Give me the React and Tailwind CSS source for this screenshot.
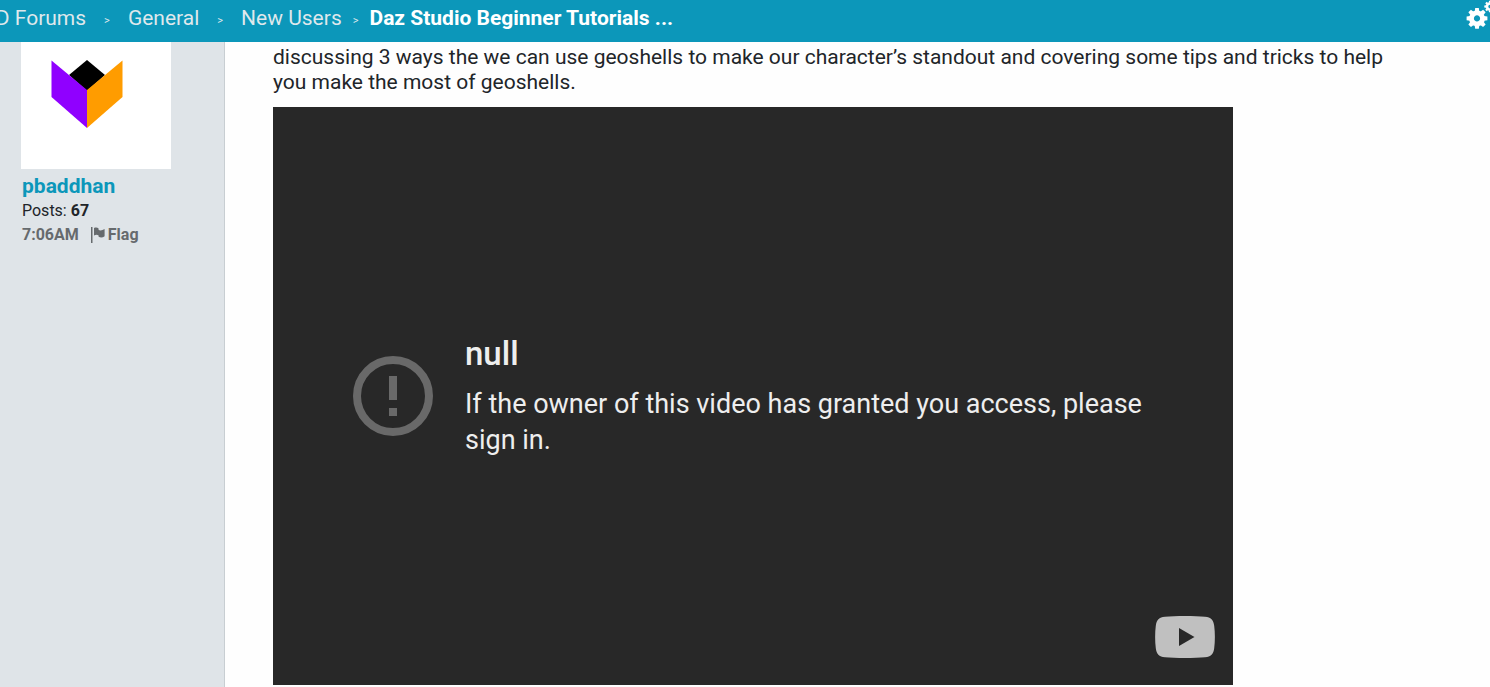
import React from "react";

const crumbs = ["3D Forums", "General", "New Users"];
const teeth = [0, 45, 90, 135, 180, 225, 270, 315];

function Gear({ transform }) {
  return (
    <g transform={transform}>
      <circle r="5.500" fill="none" stroke="#fff" strokeWidth="4.800" />
      {teeth.map((angle) => (
        <path key={angle} d="M-2.300 -7 L-1.800 -10.400 H1.800 L2.300 -7z" fill="#fff" transform={`rotate(${angle})`} />
      ))}
    </g>
  );
}

function GearsIcon() {
  return (
    <svg viewBox="0 0 32 36" className="h-9 w-8" aria-hidden="true">
      <Gear transform="translate(11 18.400)" />
      <Gear transform="translate(24 6.500) scale(.55)" />
    </svg>
  );
}

function FlagIcon() {
  return (
    <svg viewBox="0 0 14 16" className="h-4 w-3.5" fill="currentColor" aria-hidden="true">
      <path d="M0 0h1.500v16H0zM3 1c1.600-.7 3.400-.6 4.600.4V3c1.800.8 3.800.4 6-1v7.200c-1.800 1.500-4 1.600-6 .6V8.400C6.200 7.600 4.600 7.700 3 8.600z" />
    </svg>
  );
}

function Avatar() {
  return (
    <svg viewBox="0 0 150 127" className="w-[150px] bg-white" role="img" aria-label="pbaddhan">
      <path d="M66 18 84 33 66 49 48 33z" fill="#000" />
      <path d="M30.500 18.500 66 48v38L30.500 55z" fill="#9000ff" />
      <path d="M101.500 18.500 66 48v38l35.500-31z" fill="#ff9c00" />
    </svg>
  );
}

export default function App() {
  return (
    <div className="flex min-h-screen flex-col overflow-hidden bg-[#fefefe] font-[Roboto,sans-serif] text-[#212529]">
      <header className="flex h-[42px] items-center justify-between overflow-hidden bg-[#0c97ba] text-[21px] leading-6 text-[#dfe8ec]">
        <nav aria-label="Breadcrumb" className="-ml-4 -mt-1.5 flex items-center whitespace-nowrap">
          {crumbs.map((name) => (
            <React.Fragment key={name}>
              <a href="#">{name}</a>
              <span className="mx-[18px] pt-1.5 text-[11px] nth-last-2:mx-[11px]">&gt;</span>
            </React.Fragment>
          ))}
          <a href="#" className="font-bold text-white">Daz Studio Beginner Tutorials ...</a>
        </nav>
        <button type="button" aria-label="Settings" className="-mr-2 -mt-1.5 shrink-0">
          <GearsIcon />
        </button>
      </header>
      <div className="flex grow">
        <aside className="w-[225px] shrink-0 border-r border-[#c8ced2] bg-[#dfe4e8] pl-[21px]">
          <Avatar />
          <div className="pl-px">
            <a href="#" className="mt-1 block text-[21px] font-bold leading-[26px] text-[#0c97ba]">pbaddhan</a>
            <p className="leading-6">Posts: <b>67</b></p>
            <div className="flex items-center gap-3 font-bold leading-6 text-[#666a6d]">
              <span>7:06AM</span>
              <button type="button" className="flex items-center gap-[3px]"><FlagIcon />Flag</button>
            </div>
          </div>
        </aside>
        <main className="min-w-0 grow pl-12 pr-[70px] pt-[3px]">
          <p className="text-[21px] leading-[25px]">
            discussing 3 ways the we can use geoshells to make our character’s standout and covering some tips and tricks to help you make the most of geoshells.
          </p>
          <section className="relative mt-3 flex aspect-[960/578] w-full max-w-[960px] items-center bg-[#282828] pl-20 pr-16 text-[#eee]">
            <svg viewBox="0 0 80 80" className="mr-8 size-20 shrink-0" fill="#696969" aria-hidden="true">
              <path d="M36 20h8v24h-8zM36 52h8v8h-8z" />
              <circle cx="40" cy="40" r="36" fill="none" stroke="#696969" strokeWidth="8" />
            </svg>
            <div>
              <h2 className="mb-3 text-[33px] font-medium leading-10">null</h2>
              <p className="text-[27px] leading-9">If the owner of this video has granted you access, please sign in.</p>
            </div>
            <a href="#" aria-label="YouTube" className="absolute bottom-[27px] right-[18px]">
              <svg viewBox="0 0 60 42" className="block h-[42px] w-[60px]" aria-hidden="true">
                <path d="M10 .8C20-.2 40-.2 50 .8c6 .5 8.500 3 9.200 9 .9 7 .9 15.400 0 22.400-.7 6-3.200 8.500-9.200 9-10 1-30 1-40 0-6-.5-8.500-3-9.200-9-.9-7-.9-15.400 0-22.400C1.500 3.800 4 1.300 10 .8z" fill="#c0c0c0" />
                <path d="M24 12v18l15.500-9z" fill="#282828" />
              </svg>
            </a>
          </section>
        </main>
      </div>
    </div>
  );
}
